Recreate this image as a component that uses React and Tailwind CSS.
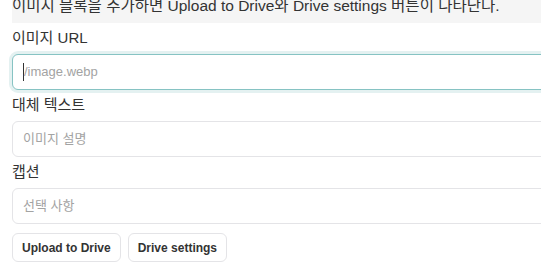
import React from "react";

const FONT = { fontFamily: '"Liberation Sans", "Noto Sans CJK KR", sans-serif' };

function Field({ label, placeholder, focused }) {
  return (
    <div className="flex flex-col">
      <label className="text-[15px] leading-[22px] text-[#333] mb-[5px]">{label}</label>
      <div
        className={
          focused
            ? "h-9 rounded-md border border-[#86c3c3] ring-[3px] ring-[#e4f1f1] bg-white flex items-center px-[10px]"
            : "h-9 rounded-md border border-[#e4e4e7] bg-white flex items-center px-[10px]"
        }
      >
        {focused && <span className="w-px h-[18px] bg-[#333]" />}
        <span className="text-[13px] text-[#a3a3a3]">{placeholder}</span>
      </div>
    </div>
  );
}

export default function App() {
  return (
    <div className="w-screen h-[263px] overflow-hidden bg-white" style={FONT}>
      <div className="w-[620px] pl-3">
        <div className="h-[23px] bg-[#f5f5f5] overflow-hidden">
          <p className="text-[15.5px] leading-[22px] text-[#333] -mt-[5px] whitespace-nowrap">
            이미지 블록을 추가하면 Upload to Drive와 Drive settings 버튼이 나타난다.
          </p>
        </div>
        <div className="flex flex-col gap-1 mt-1">
          <Field label="이미지 URL" placeholder="/image.webp" focused />
          <Field label="대체 텍스트" placeholder="이미지 설명" />
          <Field label="캡션" placeholder="선택 사항" />
        </div>
        <div className="flex gap-[7px] mt-[9px]">
          <button className="h-[29px] px-[9px] rounded-md border border-[#e4e4e7] bg-white text-[12px] font-bold text-[#333]">
            Upload to Drive
          </button>
          <button className="h-[29px] px-[9px] rounded-md border border-[#e4e4e7] bg-white text-[12px] font-bold text-[#333]">
            Drive settings
          </button>
        </div>
      </div>
    </div>
  );
}
